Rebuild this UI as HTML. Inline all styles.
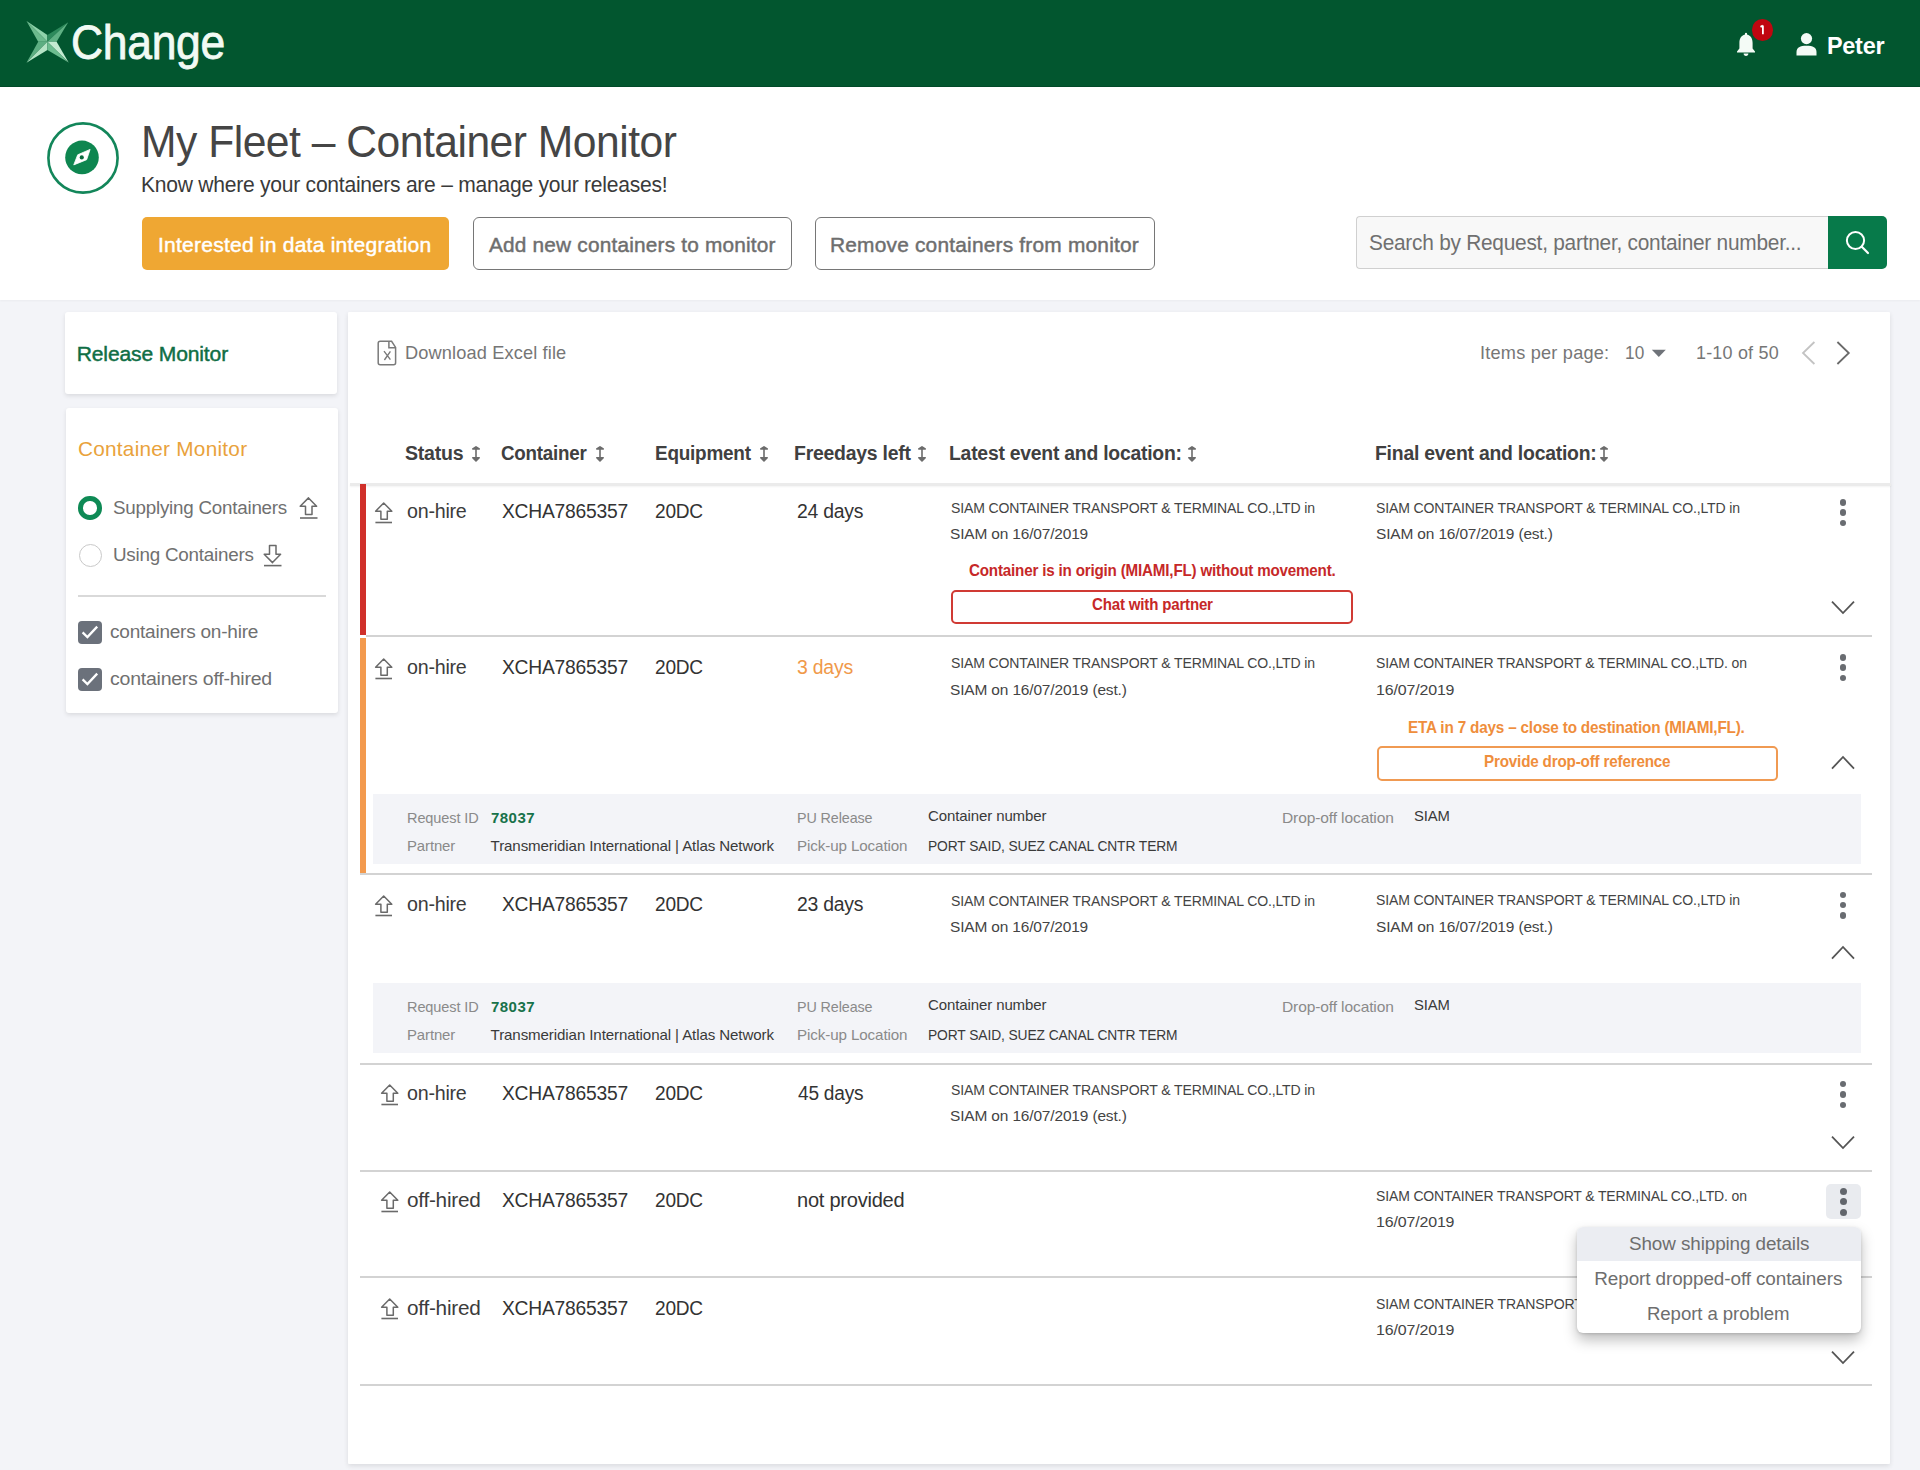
<!DOCTYPE html>
<html><head><meta charset="utf-8"><title>My Fleet – Container Monitor</title>
<style>
html,body{margin:0;padding:0}
body{width:1920px;height:1470px;position:relative;overflow:hidden;background:#F3F4F8;font-family:"Liberation Sans",sans-serif}
.a{position:absolute;box-sizing:border-box}
.t{position:absolute;white-space:nowrap;transform-origin:0 0;font-family:"Liberation Sans",sans-serif}
svg{position:absolute;overflow:visible}
.sep{position:absolute;left:366px;width:1506px;height:2px;background:#D3D3D3}
.dot{position:absolute;width:7px;height:7px;border-radius:50%;background:#62666C}
</style></head><body>
<!-- header -->
<div class="a" style="left:0;top:0;width:1920px;height:87px;background:#02562F;border-bottom:1px solid #014A29"></div>
<svg style="left:0;top:0" width="80" height="80" viewBox="0 0 80 80">
  <polygon points="26.5,20.9 47.4,35 47.4,41.8" fill="#8FD3AB"/>
  <polygon points="26.5,20.9 38.2,41.8 47.4,41.8" fill="#6DBA8E"/>
  <polygon points="68.2,22.2 47.4,35 47.4,41.8" fill="#2E8A5C"/>
  <polygon points="68.2,22.2 56.6,41.8 47.4,41.8" fill="#5FB184"/>
  <polygon points="26.5,62.8 38.2,41.8 47.4,41.8" fill="#5DAE82"/>
  <polygon points="26.5,62.8 47.4,50 47.4,41.8" fill="#B5E4C6"/>
  <polygon points="68.6,62.4 56.6,41.8 47.4,41.8" fill="#C3EBD1"/>
  <polygon points="68.6,62.4 47.4,50 47.4,41.8" fill="#6DBD90"/>
</svg>
<!-- bell -->
<svg style="left:1734px;top:32px" width="24" height="26" viewBox="0 0 24 26">
  <path d="M11 1.2 C11 0.5 13 0.5 13 1.2 L13 2.6 C17 3.6 18.6 7 18.6 11 L18.6 16.5 L21 19.4 L21 20.6 L3 20.6 L3 19.4 L5.4 16.5 L5.4 11 C5.4 7 7 3.6 11 2.6 Z" fill="#F4FBF6"/>
  <path d="M9.6 21.6 L14.4 21.6 C14.4 23.2 13.4 24 12 24 C10.6 24 9.6 23.2 9.6 21.6 Z" fill="#F4FBF6"/>
</svg>
<div class="a" style="left:1751.6px;top:19.2px;width:21.6px;height:21.6px;border-radius:50%;background:#C00610"></div>
<svg style="left:1756px;top:22px" width="12" height="16" viewBox="0 0 12 16"><path d="M6.9 3.4 L6.9 12.2 M6.9 3.6 L4.5 4.9" fill="none" stroke="#fff" stroke-width="1.8" stroke-linecap="butt"/></svg>
<!-- person -->
<svg style="left:1795px;top:32px" width="24" height="26" viewBox="0 0 24 26">
  <circle cx="11.5" cy="6.6" r="5.6" fill="#F4FBF6"/>
  <path d="M1.5 23.5 L1.5 20 C1.5 15.6 5 13.8 11.5 13.8 C18 13.8 21.5 15.6 21.5 20 L21.5 23.5 Z" fill="#F4FBF6"/>
</svg>

<!-- top white area -->
<div class="a" style="left:0;top:87px;width:1920px;height:213px;background:#FFFFFF;box-shadow:0 1px 2px rgba(0,0,0,0.04)"></div>
<!-- compass -->
<svg style="left:40px;top:115px" width="86" height="86" viewBox="0 0 86 86">
  <circle cx="43" cy="43" r="34.6" fill="none" stroke="#13865A" stroke-width="2.6"/>
  <circle cx="42" cy="42.4" r="16.8" fill="#0E8650"/>
  <polygon points="33.75,49.9 37.7,39.8 50.1,34.4 46.65,44.7" fill="#FFFFFF" stroke="#FFFFFF" stroke-width="0.8" stroke-linejoin="round"/>
  <circle cx="41.75" cy="42.4" r="2.1" fill="#0A6A3E"/>
</svg>
<!-- buttons -->
<div class="a" style="left:142px;top:217px;width:307px;height:53px;border-radius:5px;background:#EFA733"></div>
<div class="a" style="left:472.5px;top:217.2px;width:319px;height:53px;border-radius:6px;border:1.7px solid #767676;background:#fff"></div>
<div class="a" style="left:814.8px;top:217.2px;width:340.6px;height:53px;border-radius:6px;border:1.7px solid #767676;background:#fff"></div>
<!-- search -->
<div class="a" style="left:1356px;top:216px;width:473px;height:53px;border-radius:4px 0 0 4px;border:1.5px solid #D0D0D0;border-right:none;background:#F8F8F8"></div>
<div class="a" style="left:1828px;top:216px;width:59px;height:53px;border-radius:0 5px 5px 0;background:#077A4A"></div>
<svg style="left:1844px;top:229px" width="28" height="28" viewBox="0 0 28 28">
  <circle cx="11.5" cy="11.5" r="8.6" fill="none" stroke="#fff" stroke-width="2"/>
  <line x1="17.8" y1="17.8" x2="24" y2="24" stroke="#fff" stroke-width="2.2" stroke-linecap="round"/>
</svg>

<!-- sidebar cards -->
<div class="a" style="left:65px;top:312px;width:272px;height:82px;border-radius:3px;background:#fff;box-shadow:0 2px 4px rgba(0,0,0,0.10)"></div>
<div class="a" style="left:66px;top:408px;width:272px;height:305px;border-radius:3px;background:#fff;box-shadow:0 2px 4px rgba(0,0,0,0.10)"></div>
<!-- radios -->
<div class="a" style="left:78.3px;top:496.3px;width:23.4px;height:23.4px;border-radius:50%;border:5.6px solid #0E8A55;background:#fff"></div>
<div class="a" style="left:78.5px;top:543.9px;width:23px;height:23px;border-radius:50%;border:1.3px solid #C9C9C9;background:#fff"></div>
<!-- sidebar arrows -->
<svg style="left:299px;top:496px" width="20" height="24" viewBox="0 0 20 24">
  <path d="M9.5 1.9 L17.6 10.3 L13 10.3 L13 18.4 L6.5 18.4 L6.5 10.3 L1.2 10.3 Z" fill="none" stroke="#6A6A6A" stroke-width="1.5" stroke-linejoin="round"/>
  <line x1="1" y1="22" x2="18.5" y2="22" stroke="#6A6A6A" stroke-width="1.6"/>
</svg>
<svg style="left:263px;top:544px" width="20" height="24" viewBox="0 0 20 24">
  <path d="M9.5 18.6 L17.6 10.2 L13 10.2 L13 1.6 L6.5 1.6 L6.5 10.2 L1.2 10.2 Z" fill="none" stroke="#6A6A6A" stroke-width="1.5" stroke-linejoin="round"/>
  <line x1="1" y1="21.6" x2="18.5" y2="21.6" stroke="#6A6A6A" stroke-width="1.6"/>
</svg>
<div class="a" style="left:78px;top:595px;width:248px;height:2px;background:#D9D9D9"></div>
<!-- checkboxes -->
<div class="a" style="left:78.3px;top:620.7px;width:23.6px;height:23px;border-radius:4px;background:#6B717B"></div>
<div class="a" style="left:78.3px;top:668px;width:23.6px;height:23px;border-radius:4px;background:#6B717B"></div>
<svg style="left:78px;top:620px" width="24" height="24" viewBox="0 0 24 24"><path d="M4.6 12.4 L9.4 17 L19.2 6.6" fill="none" stroke="#fff" stroke-width="2.3"/></svg>
<svg style="left:78px;top:667.3px" width="24" height="24" viewBox="0 0 24 24"><path d="M4.6 12.4 L9.4 17 L19.2 6.6" fill="none" stroke="#fff" stroke-width="2.3"/></svg>

<!-- main card -->
<div class="a" style="left:348px;top:312px;width:1542px;height:1152px;border-radius:1px;background:#fff;box-shadow:0 2px 5px rgba(0,0,0,0.10)"></div>
<!-- excel icon -->
<svg style="left:376px;top:339px" width="22" height="28" viewBox="0 0 22 28">
  <path d="M4.2 2.3 L15.6 2.3 L19.6 8.4 L19.6 23.8 C19.6 25 18.8 25.8 17.6 25.8 L4.2 25.8 C3 25.8 2.2 25 2.2 23.8 L2.2 4.3 C2.2 3.1 3 2.3 4.2 2.3 Z" fill="none" stroke="#7A7A7A" stroke-width="1.5"/>
  <path d="M12.9 3 L12.9 8.7 L19 8.7" fill="none" stroke="#7A7A7A" stroke-width="1.5"/>
  <path d="M8 12.2 L14.4 20.6 M14.4 12.4 L8.4 21" stroke="#7A7A7A" stroke-width="1.4"/>
</svg>
<!-- pagination -->
<svg style="left:1650px;top:348px" width="18" height="12" viewBox="0 0 18 12"><polygon points="1.8,1.8 15.8,1.8 8.8,9" fill="#6F7379"/></svg>
<svg style="left:1798px;top:338px" width="20" height="30" viewBox="0 0 20 30"><path d="M16.4 4 L5 15 L16.4 26" fill="none" stroke="#C3C3C3" stroke-width="1.8"/></svg>
<svg style="left:1834px;top:338px" width="20" height="30" viewBox="0 0 20 30"><path d="M3.4 4 L14.8 15 L3.4 26" fill="none" stroke="#6A6A6A" stroke-width="1.8"/></svg>
<!-- sort icons -->
<svg style="left:472px;top:446px" width="8" height="16" viewBox="0 0 8 16"><path d="M4 0.8 L7.2 3 L0.8 3 Z M4 3 L4 12 M0.8 11.8 L7.2 11.8 L4 14.9 Z" fill="#6C6C6C" stroke="#6C6C6C" stroke-width="1.6" stroke-linejoin="round"/></svg>
<svg style="left:596px;top:446px" width="8" height="16" viewBox="0 0 8 16"><path d="M4 0.8 L7.2 3 L0.8 3 Z M4 3 L4 12 M0.8 11.8 L7.2 11.8 L4 14.9 Z" fill="#6C6C6C" stroke="#6C6C6C" stroke-width="1.6" stroke-linejoin="round"/></svg>
<svg style="left:760px;top:446px" width="8" height="16" viewBox="0 0 8 16"><path d="M4 0.8 L7.2 3 L0.8 3 Z M4 3 L4 12 M0.8 11.8 L7.2 11.8 L4 14.9 Z" fill="#6C6C6C" stroke="#6C6C6C" stroke-width="1.6" stroke-linejoin="round"/></svg>
<svg style="left:918px;top:446px" width="8" height="16" viewBox="0 0 8 16"><path d="M4 0.8 L7.2 3 L0.8 3 Z M4 3 L4 12 M0.8 11.8 L7.2 11.8 L4 14.9 Z" fill="#6C6C6C" stroke="#6C6C6C" stroke-width="1.6" stroke-linejoin="round"/></svg>
<svg style="left:1188px;top:446px" width="8" height="16" viewBox="0 0 8 16"><path d="M4 0.8 L7.2 3 L0.8 3 Z M4 3 L4 12 M0.8 11.8 L7.2 11.8 L4 14.9 Z" fill="#6C6C6C" stroke="#6C6C6C" stroke-width="1.6" stroke-linejoin="round"/></svg>
<svg style="left:1600px;top:446px" width="8" height="16" viewBox="0 0 8 16"><path d="M4 0.8 L7.2 3 L0.8 3 Z M4 3 L4 12 M0.8 11.8 L7.2 11.8 L4 14.9 Z" fill="#6C6C6C" stroke="#6C6C6C" stroke-width="1.6" stroke-linejoin="round"/></svg>
<!-- header bottom shadow -->
<div class="a" style="left:350px;top:483px;width:1541px;height:3px;background:#EBEBEB;box-shadow:0 1px 2px rgba(0,0,0,0.05)"></div>

<!-- row bars -->
<div class="a" style="left:360px;top:484px;width:6px;height:151px;background:#D0302A"></div>
<div class="a" style="left:360px;top:638px;width:6px;height:236px;background:#F39A4E"></div>
<!-- separators -->
<div class="sep" style="top:635px"></div>
<div class="sep" style="top:872.5px;left:360px;width:1512px"></div>
<div class="sep" style="top:1063.3px;left:360px;width:1512px"></div>
<div class="sep" style="top:1169.5px;left:360px;width:1512px"></div>
<div class="sep" style="top:1276px;left:360px;width:1512px"></div>
<div class="sep" style="top:1383.7px;left:360px;width:1512px"></div>
<!-- detail panels -->
<div class="a" style="left:372.5px;top:793.5px;width:1488px;height:70.5px;background:#F3F4F8"></div>
<div class="a" style="left:372.5px;top:982.5px;width:1488px;height:70.3px;background:#F3F4F8"></div>
<!-- action buttons -->
<div class="a" style="left:951px;top:589.5px;width:402px;height:34.5px;border-radius:5px;border:2px solid #D03A34"></div>
<div class="a" style="left:1377px;top:746.3px;width:401px;height:34.3px;border-radius:5px;border:2px solid #F09A52"></div>

<!-- row status icons -->
<svg style="left:374px;top:501px" width="20" height="24" viewBox="0 0 20 24"><path d="M9.7 2 L17.8 10.2 L13.3 10.2 L13.3 18.3 L6.9 18.3 L6.9 10.2 L1.6 10.2 Z" fill="none" stroke="#6A6A6A" stroke-width="1.5" stroke-linejoin="round"/><line x1="1.4" y1="21.5" x2="18" y2="21.5" stroke="#6A6A6A" stroke-width="1.6"/></svg>
<svg style="left:374px;top:656.5px" width="20" height="24" viewBox="0 0 20 24"><path d="M9.7 2 L17.8 10.2 L13.3 10.2 L13.3 18.3 L6.9 18.3 L6.9 10.2 L1.6 10.2 Z" fill="none" stroke="#6A6A6A" stroke-width="1.5" stroke-linejoin="round"/><line x1="1.4" y1="21.5" x2="18" y2="21.5" stroke="#6A6A6A" stroke-width="1.6"/></svg>
<svg style="left:374px;top:893.5px" width="20" height="24" viewBox="0 0 20 24"><path d="M9.7 2 L17.8 10.2 L13.3 10.2 L13.3 18.3 L6.9 18.3 L6.9 10.2 L1.6 10.2 Z" fill="none" stroke="#6A6A6A" stroke-width="1.5" stroke-linejoin="round"/><line x1="1.4" y1="21.5" x2="18" y2="21.5" stroke="#6A6A6A" stroke-width="1.6"/></svg>
<svg style="left:379.5px;top:1082.5px" width="20" height="24" viewBox="0 0 20 24"><path d="M9.7 2 L17.8 10.2 L13.3 10.2 L13.3 18.3 L6.9 18.3 L6.9 10.2 L1.6 10.2 Z" fill="none" stroke="#6A6A6A" stroke-width="1.5" stroke-linejoin="round"/><line x1="1.4" y1="21.5" x2="18" y2="21.5" stroke="#6A6A6A" stroke-width="1.6"/></svg>
<svg style="left:379.5px;top:1189.5px" width="20" height="24" viewBox="0 0 20 24"><path d="M9.7 2 L17.8 10.2 L13.3 10.2 L13.3 18.3 L6.9 18.3 L6.9 10.2 L1.6 10.2 Z" fill="none" stroke="#6A6A6A" stroke-width="1.5" stroke-linejoin="round"/><line x1="1.4" y1="21.5" x2="18" y2="21.5" stroke="#6A6A6A" stroke-width="1.6"/></svg>
<svg style="left:379.5px;top:1297px" width="20" height="24" viewBox="0 0 20 24"><path d="M9.7 2 L17.8 10.2 L13.3 10.2 L13.3 18.3 L6.9 18.3 L6.9 10.2 L1.6 10.2 Z" fill="none" stroke="#6A6A6A" stroke-width="1.5" stroke-linejoin="round"/><line x1="1.4" y1="21.5" x2="18" y2="21.5" stroke="#6A6A6A" stroke-width="1.6"/></svg>

<!-- kebabs -->
<div class="dot" style="left:1839.9px;top:499.2px;width:6.4px;height:6.4px;background:#696C71"></div><div class="dot" style="left:1839.9px;top:509.4px;width:6.4px;height:6.4px;background:#696C71"></div><div class="dot" style="left:1839.9px;top:519.8px;width:6.4px;height:6.4px;background:#696C71"></div>
<div class="dot" style="left:1839.9px;top:654.2px;width:6.4px;height:6.4px;background:#696C71"></div><div class="dot" style="left:1839.9px;top:664.4px;width:6.4px;height:6.4px;background:#696C71"></div><div class="dot" style="left:1839.9px;top:674.8px;width:6.4px;height:6.4px;background:#696C71"></div>
<div class="dot" style="left:1839.9px;top:891.5px;width:6.4px;height:6.4px;background:#696C71"></div><div class="dot" style="left:1839.9px;top:902.0px;width:6.4px;height:6.4px;background:#696C71"></div><div class="dot" style="left:1839.9px;top:912.4px;width:6.4px;height:6.4px;background:#696C71"></div>
<div class="dot" style="left:1839.9px;top:1080.7px;width:6.4px;height:6.4px;background:#696C71"></div><div class="dot" style="left:1839.9px;top:1091.3px;width:6.4px;height:6.4px;background:#696C71"></div><div class="dot" style="left:1839.9px;top:1101.8px;width:6.4px;height:6.4px;background:#696C71"></div>
<div class="a" style="left:1825.6px;top:1184.2px;width:35px;height:34.7px;border-radius:5px;background:#E9EBEF"></div>
<div class="dot" style="left:1839.6px;top:1187.5px"></div><div class="dot" style="left:1839.6px;top:1198px"></div><div class="dot" style="left:1839.6px;top:1208.5px"></div>
<!-- chevrons -->
<svg style="left:1830px;top:598px" width="26" height="20" viewBox="0 0 26 20"><path d="M2 3.6 L13 15 L24 3.6" fill="none" stroke="#555" stroke-width="1.8"/></svg>
<svg style="left:1830px;top:753px" width="26" height="20" viewBox="0 0 26 20"><path d="M2 15.6 L13 4 L24 15.6" fill="none" stroke="#555" stroke-width="1.8"/></svg>
<svg style="left:1830px;top:942.5px" width="26" height="20" viewBox="0 0 26 20"><path d="M2 15.6 L13 4 L24 15.6" fill="none" stroke="#555" stroke-width="1.8"/></svg>
<svg style="left:1830px;top:1133px" width="26" height="20" viewBox="0 0 26 20"><path d="M2 3.6 L13 15 L24 3.6" fill="none" stroke="#555" stroke-width="1.8"/></svg>
<svg style="left:1830px;top:1347.5px" width="26" height="20" viewBox="0 0 26 20"><path d="M2 3.6 L13 15 L24 3.6" fill="none" stroke="#555" stroke-width="1.8"/></svg>

<div class="t" style="left:71.15px;top:14.00px;font-size:47.97px;font-weight:400;-webkit-text-stroke:0.8px currentColor;line-height:58px;letter-spacing:-0.3px;color:#F2FAF4;transform:scaleX(0.9264);">Change</div>
<div class="t" style="left:1827.05px;top:30.60px;font-size:24.71px;font-weight:700;line-height:30px;letter-spacing:-0.297px;color:#FFFFFF;transform:scaleX(0.9492);">Peter</div>
<div class="t" style="left:141.07px;top:115.70px;font-size:43.6px;font-weight:400;line-height:52px;letter-spacing:-0.523px;color:#454545;transform:scaleX(0.9780);">My Fleet – Container Monitor</div>
<div class="t" style="left:141.07px;top:171.90px;font-size:21.8px;font-weight:400;line-height:26px;letter-spacing:-0.262px;color:#3A3A3A;transform:scaleX(0.9667);">Know where your containers are – manage your releases!</div>
<div class="t" style="left:158.00px;top:231.50px;font-size:21.08px;font-weight:400;-webkit-text-stroke:0.45px currentColor;line-height:25px;letter-spacing:0.207px;color:#FFFFFF;">Interested in data integration</div>
<div class="t" style="left:489.00px;top:231.50px;font-size:21.08px;font-weight:400;-webkit-text-stroke:0.45px currentColor;line-height:25px;letter-spacing:0.207px;color:#6E6E6E;transform:scaleX(0.9863);">Add new containers to monitor</div>
<div class="t" style="left:830.01px;top:231.50px;font-size:21.08px;font-weight:400;-webkit-text-stroke:0.45px currentColor;line-height:25px;letter-spacing:0.207px;color:#6E6E6E;transform:scaleX(0.9904);">Remove containers from monitor</div>
<div class="t" style="left:1368.54px;top:230.30px;font-size:21.8px;font-weight:400;line-height:26px;letter-spacing:-0.262px;color:#707070;transform:scaleX(0.9570);">Search by Request, partner, container number...</div>
<div class="t" style="left:76.70px;top:340.50px;font-size:21.08px;font-weight:400;-webkit-text-stroke:0.45px currentColor;line-height:25px;letter-spacing:-0.143px;color:#0F6E45;">Release Monitor</div>
<div class="t" style="left:78.00px;top:436.00px;font-size:20.78px;font-weight:400;line-height:25px;letter-spacing:0.25px;color:#E9A23B;">Container Monitor</div>
<div class="t" style="left:113.01px;top:496.30px;font-size:18.9px;font-weight:400;line-height:23px;letter-spacing:-0.227px;color:#707070;transform:scaleX(0.9943);">Supplying Containers</div>
<div class="t" style="left:113.00px;top:543.00px;font-size:18.9px;font-weight:400;line-height:23px;letter-spacing:-0.227px;color:#707070;transform:scaleX(0.9957);">Using Containers</div>
<div class="t" style="left:110.39px;top:619.50px;font-size:18.9px;font-weight:400;line-height:23px;letter-spacing:-0.227px;color:#707070;transform:scaleX(1.0068);">containers on-hire</div>
<div class="t" style="left:110.37px;top:666.80px;font-size:18.9px;font-weight:400;line-height:23px;letter-spacing:-0.227px;color:#707070;transform:scaleX(1.0323);">containers off-hired</div>
<div class="t" style="left:404.60px;top:342.00px;font-size:18.17px;font-weight:400;line-height:22px;letter-spacing:0.133px;color:#767676;transform:scaleX(1.0025);">Download Excel file</div>
<div class="t" style="left:1480.00px;top:342.20px;font-size:18.17px;font-weight:400;line-height:22px;letter-spacing:0.214px;color:#767676;">Items per page:</div>
<div class="t" style="left:1625.05px;top:342.20px;font-size:18.17px;font-weight:400;line-height:22px;letter-spacing:0.214px;color:#767676;transform:scaleX(0.9474);">10</div>
<div class="t" style="left:1696.01px;top:342.20px;font-size:18.17px;font-weight:400;line-height:22px;letter-spacing:0.214px;color:#767676;transform:scaleX(0.9878);">1-10 of 50</div>
<div class="t" style="left:405.07px;top:440.00px;font-size:20.93px;font-weight:700;line-height:25px;letter-spacing:-0.251px;color:#404040;transform:scaleX(0.9344);">Status</div>
<div class="t" style="left:500.70px;top:440.00px;font-size:20.93px;font-weight:700;line-height:25px;letter-spacing:-0.251px;color:#404040;transform:scaleX(0.8979);">Container</div>
<div class="t" style="left:655.10px;top:440.00px;font-size:20.93px;font-weight:700;line-height:25px;letter-spacing:-0.251px;color:#404040;transform:scaleX(0.9048);">Equipment</div>
<div class="t" style="left:794.07px;top:440.00px;font-size:20.93px;font-weight:700;line-height:25px;letter-spacing:-0.251px;color:#404040;transform:scaleX(0.9280);">Freedays left</div>
<div class="t" style="left:949.27px;top:440.00px;font-size:20.93px;font-weight:700;line-height:25px;letter-spacing:-0.251px;color:#404040;transform:scaleX(0.9253);">Latest event and location:</div>
<div class="t" style="left:1374.67px;top:440.00px;font-size:20.93px;font-weight:700;line-height:25px;letter-spacing:-0.251px;color:#404040;transform:scaleX(0.9271);">Final event and location:</div>
<div class="t" style="left:407.03px;top:499.30px;font-size:20.35px;font-weight:400;line-height:24px;letter-spacing:-0.244px;color:#3C3C3C;transform:scaleX(0.9667);">on-hire</div>
<div class="t" style="left:501.75px;top:499.30px;font-size:20.35px;font-weight:400;line-height:24px;letter-spacing:-0.244px;color:#333333;transform:scaleX(0.9470);">XCHA7865357</div>
<div class="t" style="left:655.06px;top:499.30px;font-size:20.35px;font-weight:400;line-height:24px;letter-spacing:-0.244px;color:#333333;transform:scaleX(0.9388);">20DC</div>
<div class="t" style="left:797.05px;top:499.30px;font-size:20.35px;font-weight:400;line-height:24px;letter-spacing:-0.244px;color:#333333;transform:scaleX(0.9529);">24 days</div>
<div class="t" style="left:950.50px;top:498.00px;font-size:15.55px;font-weight:400;line-height:19px;letter-spacing:-0.15px;color:#444444;transform:scaleX(0.9035);">SIAM CONTAINER TRANSPORT &amp; TERMINAL CO.,LTD in</div>
<div class="t" style="left:950.41px;top:524.20px;font-size:15.55px;font-weight:400;line-height:19px;letter-spacing:-0.15px;color:#444444;transform:scaleX(0.9928);">SIAM on 16/07/2019</div>
<div class="t" style="left:1376.10px;top:498.00px;font-size:15.55px;font-weight:400;line-height:19px;letter-spacing:-0.15px;color:#444444;transform:scaleX(0.9035);">SIAM CONTAINER TRANSPORT &amp; TERMINAL CO.,LTD in</div>
<div class="t" style="left:1376.01px;top:524.20px;font-size:15.55px;font-weight:400;line-height:19px;letter-spacing:-0.15px;color:#444444;transform:scaleX(0.9943);">SIAM on 16/07/2019 (est.)</div>
<div class="t" style="left:968.55px;top:561.40px;font-size:15.99px;font-weight:700;line-height:19px;letter-spacing:-0.192px;color:#C62828;transform:scaleX(0.9491);">Container is in origin (MIAMI,FL) without movement.</div>
<div class="t" style="left:1091.76px;top:595.30px;font-size:15.99px;font-weight:700;line-height:19px;letter-spacing:-0.192px;color:#C62828;transform:scaleX(0.9425);">Chat with partner</div>
<div class="t" style="left:407.03px;top:654.75px;font-size:20.35px;font-weight:400;line-height:24px;letter-spacing:-0.244px;color:#3C3C3C;transform:scaleX(0.9667);">on-hire</div>
<div class="t" style="left:501.75px;top:654.75px;font-size:20.35px;font-weight:400;line-height:24px;letter-spacing:-0.244px;color:#333333;transform:scaleX(0.9470);">XCHA7865357</div>
<div class="t" style="left:655.06px;top:654.75px;font-size:20.35px;font-weight:400;line-height:24px;letter-spacing:-0.244px;color:#333333;transform:scaleX(0.9388);">20DC</div>
<div class="t" style="left:797.04px;top:654.75px;font-size:20.35px;font-weight:400;line-height:24px;letter-spacing:-0.244px;color:#F0994A;transform:scaleX(0.9561);">3 days</div>
<div class="t" style="left:950.50px;top:653.00px;font-size:15.55px;font-weight:400;line-height:19px;letter-spacing:-0.15px;color:#444444;transform:scaleX(0.9035);">SIAM CONTAINER TRANSPORT &amp; TERMINAL CO.,LTD in</div>
<div class="t" style="left:950.41px;top:679.70px;font-size:15.55px;font-weight:400;line-height:19px;letter-spacing:-0.15px;color:#444444;transform:scaleX(0.9943);">SIAM on 16/07/2019 (est.)</div>
<div class="t" style="left:1376.10px;top:653.10px;font-size:15.55px;font-weight:400;line-height:19px;letter-spacing:-0.15px;color:#444444;transform:scaleX(0.8995);">SIAM CONTAINER TRANSPORT &amp; TERMINAL CO.,LTD. on</div>
<div class="t" style="left:1375.97px;top:679.80px;font-size:15.55px;font-weight:400;line-height:19px;letter-spacing:-0.15px;color:#444444;transform:scaleX(1.0267);">16/07/2019</div>
<div class="t" style="left:1408.24px;top:717.80px;font-size:15.99px;font-weight:700;line-height:19px;letter-spacing:-0.192px;color:#EF8E3C;transform:scaleX(0.9558);">ETA in 7 days – close to destination (MIAMI,FL).</div>
<div class="t" style="left:1484.05px;top:752.00px;font-size:15.99px;font-weight:700;line-height:19px;letter-spacing:-0.192px;color:#EF8E3C;transform:scaleX(0.9523);">Provide drop-off reference</div>
<div class="t" style="left:406.84px;top:808.50px;font-size:15.12px;font-weight:400;line-height:18px;letter-spacing:-0.11px;color:#8A8A8A;transform:scaleX(0.9616);">Request ID</div>
<div class="t" style="left:490.60px;top:808.50px;font-size:15.12px;font-weight:700;line-height:18px;letter-spacing:0.45px;color:#17724A;transform:scaleX(0.9953);">78037</div>
<div class="t" style="left:407.31px;top:836.60px;font-size:15.12px;font-weight:400;line-height:18px;letter-spacing:-0.11px;color:#8A8A8A;transform:scaleX(0.9875);">Partner</div>
<div class="t" style="left:490.60px;top:836.60px;font-size:15.12px;font-weight:400;line-height:18px;letter-spacing:-0.11px;color:#3A3A3A;">Transmeridian International | Atlas Network</div>
<div class="t" style="left:796.55px;top:808.50px;font-size:15.12px;font-weight:400;line-height:18px;letter-spacing:-0.11px;color:#8A8A8A;transform:scaleX(0.9487);">PU Release</div>
<div class="t" style="left:796.50px;top:836.60px;font-size:15.12px;font-weight:400;line-height:18px;letter-spacing:-0.11px;color:#8A8A8A;transform:scaleX(1.0046);">Pick-up Location</div>
<div class="t" style="left:928.41px;top:807.00px;font-size:15.12px;font-weight:400;line-height:18px;letter-spacing:-0.11px;color:#3A3A3A;transform:scaleX(0.9932);">Container number</div>
<div class="t" style="left:928.49px;top:836.60px;font-size:15.12px;font-weight:400;line-height:18px;letter-spacing:-0.11px;color:#3A3A3A;transform:scaleX(0.9137);">PORT SAID, SUEZ CANAL CNTR TERM</div>
<div class="t" style="left:1282.37px;top:808.50px;font-size:15.12px;font-weight:400;line-height:18px;letter-spacing:-0.11px;color:#8A8A8A;transform:scaleX(1.0280);">Drop-off location</div>
<div class="t" style="left:1414.32px;top:807.00px;font-size:15.12px;font-weight:400;line-height:18px;letter-spacing:-0.11px;color:#3A3A3A;transform:scaleX(0.9829);">SIAM</div>
<div class="t" style="left:407.03px;top:892.25px;font-size:20.35px;font-weight:400;line-height:24px;letter-spacing:-0.244px;color:#3C3C3C;transform:scaleX(0.9667);">on-hire</div>
<div class="t" style="left:501.75px;top:892.25px;font-size:20.35px;font-weight:400;line-height:24px;letter-spacing:-0.244px;color:#333333;transform:scaleX(0.9470);">XCHA7865357</div>
<div class="t" style="left:655.06px;top:892.25px;font-size:20.35px;font-weight:400;line-height:24px;letter-spacing:-0.244px;color:#333333;transform:scaleX(0.9388);">20DC</div>
<div class="t" style="left:797.05px;top:892.25px;font-size:20.35px;font-weight:400;line-height:24px;letter-spacing:-0.244px;color:#333333;transform:scaleX(0.9529);">23 days</div>
<div class="t" style="left:950.50px;top:891.00px;font-size:15.55px;font-weight:400;line-height:19px;letter-spacing:-0.15px;color:#444444;transform:scaleX(0.9035);">SIAM CONTAINER TRANSPORT &amp; TERMINAL CO.,LTD in</div>
<div class="t" style="left:950.41px;top:917.00px;font-size:15.55px;font-weight:400;line-height:19px;letter-spacing:-0.15px;color:#444444;transform:scaleX(0.9928);">SIAM on 16/07/2019</div>
<div class="t" style="left:1376.10px;top:890.20px;font-size:15.55px;font-weight:400;line-height:19px;letter-spacing:-0.15px;color:#444444;transform:scaleX(0.9035);">SIAM CONTAINER TRANSPORT &amp; TERMINAL CO.,LTD in</div>
<div class="t" style="left:1376.01px;top:916.90px;font-size:15.55px;font-weight:400;line-height:19px;letter-spacing:-0.15px;color:#444444;transform:scaleX(0.9943);">SIAM on 16/07/2019 (est.)</div>
<div class="t" style="left:406.84px;top:997.70px;font-size:15.12px;font-weight:400;line-height:18px;letter-spacing:-0.11px;color:#8A8A8A;transform:scaleX(0.9616);">Request ID</div>
<div class="t" style="left:490.60px;top:997.70px;font-size:15.12px;font-weight:700;line-height:18px;letter-spacing:0.45px;color:#17724A;transform:scaleX(0.9953);">78037</div>
<div class="t" style="left:407.31px;top:1026.00px;font-size:15.12px;font-weight:400;line-height:18px;letter-spacing:-0.11px;color:#8A8A8A;transform:scaleX(0.9875);">Partner</div>
<div class="t" style="left:490.60px;top:1026.00px;font-size:15.12px;font-weight:400;line-height:18px;letter-spacing:-0.11px;color:#3A3A3A;">Transmeridian International | Atlas Network</div>
<div class="t" style="left:796.55px;top:997.70px;font-size:15.12px;font-weight:400;line-height:18px;letter-spacing:-0.11px;color:#8A8A8A;transform:scaleX(0.9487);">PU Release</div>
<div class="t" style="left:796.50px;top:1026.00px;font-size:15.12px;font-weight:400;line-height:18px;letter-spacing:-0.11px;color:#8A8A8A;transform:scaleX(1.0046);">Pick-up Location</div>
<div class="t" style="left:928.41px;top:996.20px;font-size:15.12px;font-weight:400;line-height:18px;letter-spacing:-0.11px;color:#3A3A3A;transform:scaleX(0.9932);">Container number</div>
<div class="t" style="left:928.49px;top:1026.00px;font-size:15.12px;font-weight:400;line-height:18px;letter-spacing:-0.11px;color:#3A3A3A;transform:scaleX(0.9137);">PORT SAID, SUEZ CANAL CNTR TERM</div>
<div class="t" style="left:1282.37px;top:997.70px;font-size:15.12px;font-weight:400;line-height:18px;letter-spacing:-0.11px;color:#8A8A8A;transform:scaleX(1.0280);">Drop-off location</div>
<div class="t" style="left:1414.32px;top:996.20px;font-size:15.12px;font-weight:400;line-height:18px;letter-spacing:-0.11px;color:#3A3A3A;transform:scaleX(0.9829);">SIAM</div>
<div class="t" style="left:407.03px;top:1081.30px;font-size:20.35px;font-weight:400;line-height:24px;letter-spacing:-0.244px;color:#3C3C3C;transform:scaleX(0.9667);">on-hire</div>
<div class="t" style="left:501.75px;top:1081.30px;font-size:20.35px;font-weight:400;line-height:24px;letter-spacing:-0.244px;color:#333333;transform:scaleX(0.9470);">XCHA7865357</div>
<div class="t" style="left:655.06px;top:1081.30px;font-size:20.35px;font-weight:400;line-height:24px;letter-spacing:-0.244px;color:#333333;transform:scaleX(0.9388);">20DC</div>
<div class="t" style="left:798.00px;top:1081.30px;font-size:20.35px;font-weight:400;line-height:24px;letter-spacing:-0.244px;color:#333333;transform:scaleX(0.9391);">45 days</div>
<div class="t" style="left:950.50px;top:1079.60px;font-size:15.55px;font-weight:400;line-height:19px;letter-spacing:-0.15px;color:#444444;transform:scaleX(0.9035);">SIAM CONTAINER TRANSPORT &amp; TERMINAL CO.,LTD in</div>
<div class="t" style="left:950.41px;top:1106.25px;font-size:15.55px;font-weight:400;line-height:19px;letter-spacing:-0.15px;color:#444444;transform:scaleX(0.9943);">SIAM on 16/07/2019 (est.)</div>
<div class="t" style="left:406.98px;top:1187.90px;font-size:20.35px;font-weight:400;line-height:24px;letter-spacing:-0.244px;color:#3C3C3C;transform:scaleX(1.0200);">off-hired</div>
<div class="t" style="left:501.75px;top:1187.90px;font-size:20.35px;font-weight:400;line-height:24px;letter-spacing:-0.244px;color:#333333;transform:scaleX(0.9470);">XCHA7865357</div>
<div class="t" style="left:655.06px;top:1187.90px;font-size:20.35px;font-weight:400;line-height:24px;letter-spacing:-0.244px;color:#333333;transform:scaleX(0.9388);">20DC</div>
<div class="t" style="left:797.01px;top:1187.90px;font-size:20.35px;font-weight:400;line-height:24px;letter-spacing:-0.244px;color:#333333;transform:scaleX(0.9850);">not provided</div>
<div class="t" style="left:1376.10px;top:1185.80px;font-size:15.55px;font-weight:400;line-height:19px;letter-spacing:-0.15px;color:#444444;transform:scaleX(0.8995);">SIAM CONTAINER TRANSPORT &amp; TERMINAL CO.,LTD. on</div>
<div class="t" style="left:1375.97px;top:1212.00px;font-size:15.55px;font-weight:400;line-height:19px;letter-spacing:-0.15px;color:#444444;transform:scaleX(1.0267);">16/07/2019</div>
<div class="t" style="left:406.98px;top:1295.70px;font-size:20.35px;font-weight:400;line-height:24px;letter-spacing:-0.244px;color:#3C3C3C;transform:scaleX(1.0200);">off-hired</div>
<div class="t" style="left:501.75px;top:1295.70px;font-size:20.35px;font-weight:400;line-height:24px;letter-spacing:-0.244px;color:#333333;transform:scaleX(0.9470);">XCHA7865357</div>
<div class="t" style="left:655.06px;top:1295.70px;font-size:20.35px;font-weight:400;line-height:24px;letter-spacing:-0.244px;color:#333333;transform:scaleX(0.9388);">20DC</div>
<div class="t" style="left:1376.10px;top:1293.70px;font-size:15.55px;font-weight:400;line-height:19px;letter-spacing:-0.15px;color:#444444;transform:scaleX(0.9035);">SIAM CONTAINER TRANSPORT &amp; TERMINAL CO.,LTD in</div>
<div class="t" style="left:1375.97px;top:1320.30px;font-size:15.55px;font-weight:400;line-height:19px;letter-spacing:-0.15px;color:#444444;transform:scaleX(1.0267);">16/07/2019</div>

<!-- menu -->
<div class="a" style="left:1577px;top:1226.7px;width:284px;height:106px;border-radius:6px;background:#fff;box-shadow:0 7px 14px rgba(0,0,0,0.26),0 1px 3px rgba(0,0,0,0.14);z-index:5;overflow:hidden">
  <div class="a" style="left:0;top:0;width:284px;height:34px;background:#EBEDF2"></div>
</div>
<div class="t" style="left:1628.70px;top:1231.70px;font-size:18.9px;font-weight:400;line-height:23px;letter-spacing:-0.093px;color:#6E6E6E;transform:scaleX(0.9978);z-index:6;">Show shipping details</div>
<div class="t" style="left:1594.30px;top:1267.00px;font-size:18.9px;font-weight:400;line-height:23px;letter-spacing:-0.093px;color:#6E6E6E;z-index:6;">Report dropped-off containers</div>
<div class="t" style="left:1647.31px;top:1302.00px;font-size:18.9px;font-weight:400;line-height:23px;letter-spacing:-0.093px;color:#6E6E6E;transform:scaleX(0.9859);z-index:6;">Report a problem</div>
</body></html>
